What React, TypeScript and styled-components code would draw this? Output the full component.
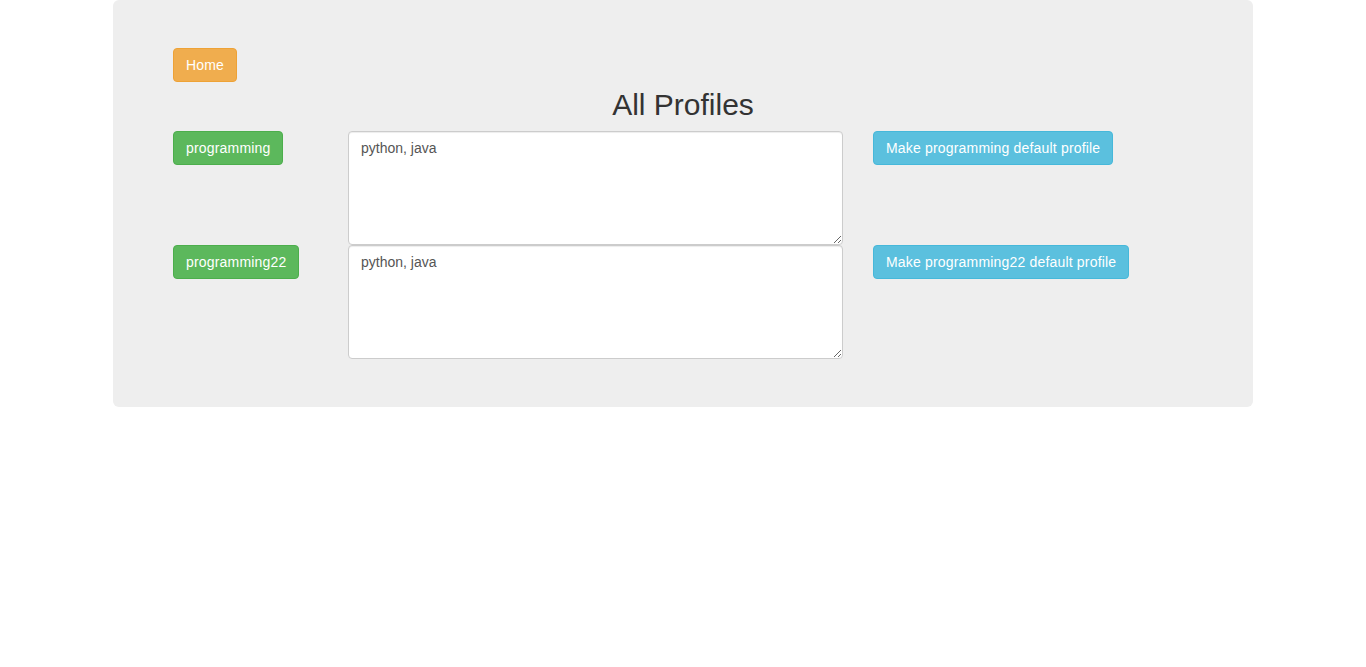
import styled, { createGlobalStyle } from 'styled-components';

type Variant = 'warning' | 'success' | 'info';

const palette: Record<Variant, { bg: string; border: string }> = {
  warning: { bg: '#f0ad4e', border: '#eea236' },
  success: { bg: '#5cb85c', border: '#4cae4c' },
  info: { bg: '#5bc0de', border: '#46b8da' },
};

const GlobalStyles = createGlobalStyle`
  * {
    box-sizing: border-box;
  }

  body {
    margin: 0;
    font-family: 'Liberation Sans', Arial, Helvetica, sans-serif;
    font-size: 14px;
    line-height: 1.42857143;
    color: #333;
    background: #fff;
  }
`;

const Container = styled.div`
  width: 1170px;
  margin: 0 auto;
  padding: 0 15px;
`;

const Jumbotron = styled.div`
  background-color: #eee;
  border-radius: 6px;
  padding: 48px 60px;
`;

const Button = styled.button<{ $variant: Variant }>`
  display: inline-block;
  padding: 6px 12px;
  font-family: inherit;
  font-size: 14px;
  line-height: 20px;
  letter-spacing: 0.18px;
  color: #fff;
  background-color: ${(p) => palette[p.$variant].bg};
  border: 1px solid ${(p) => palette[p.$variant].border};
  border-radius: 4px;
  cursor: pointer;
  white-space: nowrap;
`;

const Title = styled.h2`
  margin: 6px 0 10px;
  font-size: 30px;
  font-weight: 500;
  line-height: 1.1;
  text-align: center;
`;

const Row = styled.div`
  display: grid;
  grid-template-columns: 2fr 6fr 4fr;
  margin: 0 -15px;
`;

const Col = styled.div`
  padding: 0 15px;
`;

const TextArea = styled.textarea`
  display: block;
  width: 100%;
  height: 114px;
  padding: 6px 12px;
  font-family: inherit;
  font-size: 14px;
  line-height: 20px;
  color: #555;
  background: #fff;
  border: 1px solid #ccc;
  border-radius: 4px;
  box-shadow: inset 0 1px 1px rgba(0, 0, 0, 0.075);
  margin: 0;
`;

const profiles = [
  { name: 'programming', skills: 'python, java' },
  { name: 'programming22', skills: 'python, java' },
];

export default function App() {
  return (
    <>
      <GlobalStyles />
      <Container>
        <Jumbotron>
          <div>
            <Button $variant="warning">Home</Button>
          </div>
          <Title>All Profiles</Title>
          {profiles.map((p) => (
            <Row key={p.name}>
              <Col>
                <Button $variant="success">{p.name}</Button>
              </Col>
              <Col>
                <TextArea rows={5} defaultValue={p.skills} />
              </Col>
              <Col>
                <Button $variant="info">Make {p.name} default profile</Button>
              </Col>
            </Row>
          ))}
        </Jumbotron>
      </Container>
    </>
  );
}
